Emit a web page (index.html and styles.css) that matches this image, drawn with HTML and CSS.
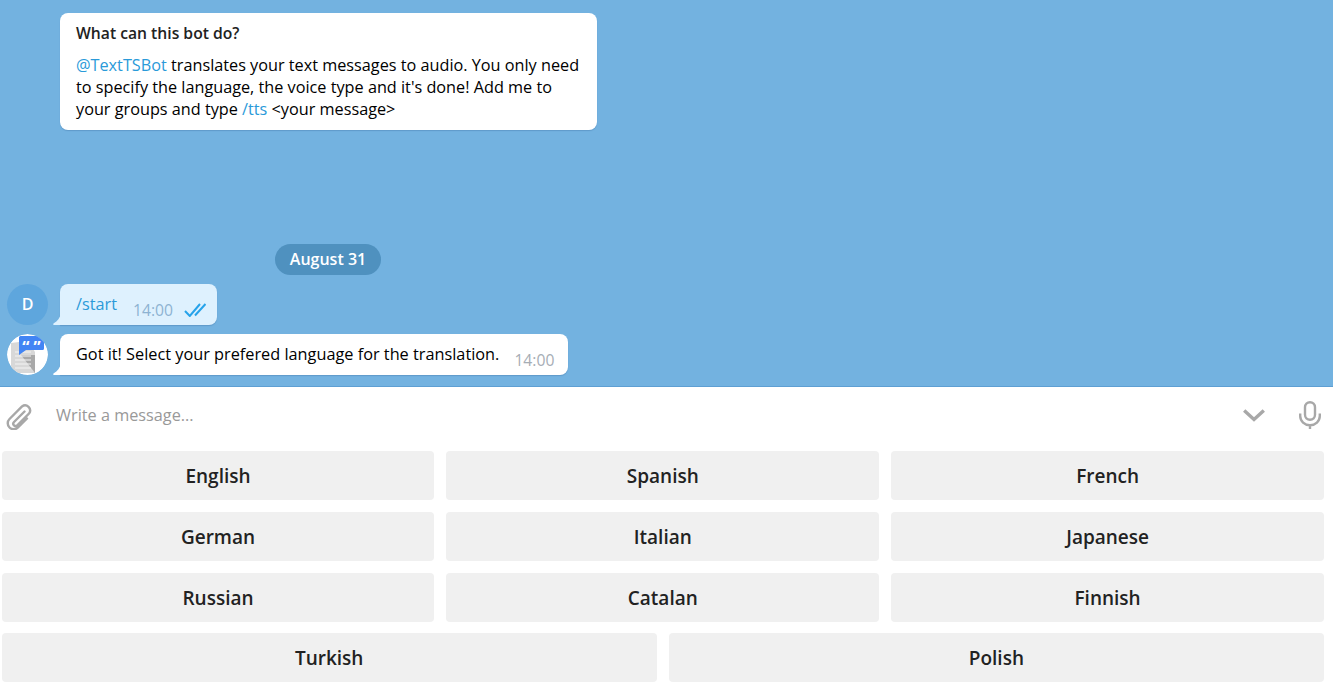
FILE: index.html
```html
<!DOCTYPE html>
<html lang="en">
<head>
<meta charset="utf-8">
<title>TextTSBot</title>
<link rel="stylesheet" href="styles.css">
</head>
<body>
<main class="chat">
  <section class="intro">
    <h2 class="intro-title">What can this bot do?</h2>
    <p class="intro-text"><span class="link">@TextTSBot</span> translates your text messages to audio. You only need to specify the language, the voice type and it's done! Add me to your groups and type <span class="link">/tts</span> &lt;your message&gt;</p>
  </section>
  <div class="date-row"><span class="date">August 31</span></div>
  <div class="msg msg-out">
    <div class="avatar avatar-d">D</div>
    <div class="bubble bubble-out">
      <svg class="tail" viewBox="0 0 8 12"><path class="tail-out" d="M8 0v12H1.500C0 12 -.3 10.900 .8 10.200 4.500 8 7 5 8 0z"/></svg>
      <span class="link">/start</span>
      <span class="time time-out">14:00</span>
      <svg class="ticks" viewBox="0 0 22 14"><path d="M1 8l4.800 5L16 1M11 12.500L21.500 1" fill="none" stroke="#27a3ea" stroke-width="2"/></svg>
    </div>
  </div>
  <div class="msg">
    <div class="avatar avatar-bot">
      <svg viewBox="0 0 41 41">
        <circle cx="20.500" cy="20.500" r="20.500" fill="#fff"/>
        <path d="M4 9l8-1h10l6 10v21H8l-4-2z" fill="#d8d8d8"/>
        <path d="M14 21h14v18z" fill="#a9a9a9"/>
        <path d="M8 18h16M8 22h16M8 26h16M8 30h16M8 34h16" stroke="#f3f3f3" stroke-width="1.200"/>
        <path d="M12 3.500a1.500 1.500 0 0 1 1.500-1.500h22a1.500 1.500 0 0 1 1.500 1.500v11a1.500 1.500 0 0 1-1.500 1.500H19l-7 5z" fill="#4285f4"/>
        <text class="quote" x="24.500" y="18.500">“ ”</text>
      </svg>
    </div>
    <div class="bubble bubble-in">
      <svg class="tail" viewBox="0 0 8 12"><path class="tail-in" d="M8 0v12H1.500C0 12 -.3 10.900 .8 10.200 4.500 8 7 5 8 0z"/></svg>
      <span class="text">Got it! Select your prefered language for the translation.</span>
      <span class="time time-in">14:00</span>
    </div>
  </div>
</main>
<footer class="composer">
  <svg class="icon-clip" viewBox="0 0 26 28"><path d="M18.500 9.500L8 20a2.300 2.300 0 0 0 3.300 3.300L23 11.500a5 5 0 0 0-7-7L3.500 17a6 6 0 0 0 8.500 8.500L21 16.500" fill="none" stroke="#a8a8a8" stroke-width="2.400" stroke-linecap="round"/></svg>
  <span class="placeholder">Write a message...</span>
  <svg class="icon-chevron" viewBox="0 0 22 13"><path d="M1.200 1.500L11 10.500l9.800-9" fill="none" stroke="#a8a8a8" stroke-width="3.400"/></svg>
  <svg class="icon-mic" viewBox="0 0 22 28"><rect x="6" y="1.200" width="10" height="17.600" rx="5" fill="none" stroke="#a8a8a8" stroke-width="2.400"/><path d="M1.200 12.500v2.500a9.800 9.200 0 0 0 19.600 0v-2.500M11 24v4" fill="none" stroke="#a8a8a8" stroke-width="2.400"/></svg>
</footer>
<section class="keyboard">
  <div class="key-row">
    <button class="key">English</button><button class="key">Spanish</button><button class="key">French</button>
  </div>
  <div class="key-row">
    <button class="key">German</button><button class="key">Italian</button><button class="key">Japanese</button>
  </div>
  <div class="key-row">
    <button class="key">Russian</button><button class="key">Catalan</button><button class="key">Finnish</button>
  </div>
  <div class="key-row">
    <button class="key">Turkish</button><button class="key">Polish</button>
  </div>
</section>
</body>
</html>
```
FILE: styles.css
```css
* { box-sizing: border-box; }
html, body { margin: 0; height: 100%; }
body {
  width: 1333px;
  height: 687px;
  overflow: hidden;
  background: #fff;
  font-family: "Open Sans", sans-serif;
  font-size: 16.250px;
  color: #000;
}
.chat {
  height: 387px;
  background: #73b2e0;
  padding: 13px 0 0 7px;
  border-bottom: 1px solid #5e9fd3;
}
.intro {
  width: 537px;
  height: 117px;
  margin-left: 53px;
  padding: 9px 16px;
  background: #fff;
  border-radius: 8px;
  box-shadow: 0 1px 1px rgba(60, 110, 160, .35);
}
.intro-title {
  margin: 0 0 10px;
  font-size: 15.700px;
  line-height: 22px;
  font-weight: 600;
  color: #222;
}
.intro-text {
  margin: 0;
  font-size: 16.240px;
  line-height: 22px;
  color: #000;
}
.link { color: #2a9ad9; }
.text { font-size: 16.300px; }
.date-row {
  width: 642px;
  margin-top: 114px;
  display: flex;
  justify-content: center;
}
.date {
  height: 31px;
  width: 106px;
  border-radius: 16px;
  background: #4f91bf;
  color: #fff;
  font-weight: 600;
  font-size: 16px;
  line-height: 30px;
  text-align: center;
}
.msg {
  display: flex;
  gap: 12px;
  margin-top: 9px;
  height: 41px;
}
.avatar {
  width: 41px;
  height: 41px;
  border-radius: 50%;
  flex: none;
  overflow: hidden;
}
.avatar svg { display: block; width: 41px; height: 41px; }
.avatar-d {
  background: #5ea6dd;
  color: #fff;
  font-weight: 600;
  font-size: 16px;
  line-height: 41px;
  text-align: center;
}
.quote {
  font-family: "Open Sans", sans-serif;
  font-size: 16px;
  font-weight: 700;
  fill: #fff;
  text-anchor: middle;
}
.bubble {
  position: relative;
  display: flex;
  height: 41px;
  padding: 9px 14px 0 16px;
  background: #fff;
  border-radius: 8px 8px 8px 0;
  line-height: 22px;
  box-shadow: 0 1px 1px rgba(60, 110, 160, .35);
}
.bubble-in { width: 508px; padding-right: 0; }
.bubble-out { background: #def1fe; padding-right: 11px; }
.tail {
  position: absolute;
  left: -7px;
  bottom: 0;
  width: 8px;
  height: 12px;
}
.tail-out { fill: #def1fe; }
.tail-in { fill: #fff; }
.time {
  margin: 6px 0 0 16px;
  color: #a6adb5;
  font-size: 15.700px;
  line-height: 22px;
}
.time-in { margin-left: 15px; }
.time-out { color: #8db3d2; margin-left: 16px; }
.ticks {
  width: 22px;
  height: 14px;
  margin: 10px 0 0 11px;
}
.composer {
  display: flex;
  align-items: center;
  height: 57px;
  padding: 0 12px 0 6px;
}
.icon-clip { width: 26px; height: 28px; flex: none; }
.placeholder {
  margin-left: 24px;
  margin-top: -2px;
  flex: 1;
  color: #999;
}
.icon-chevron { width: 22px; height: 13px; margin-right: 34px; }
.icon-mic { width: 22px; height: 28px; margin-top: -2px; }
.keyboard {
  display: flex;
  flex-direction: column;
  gap: 11.700px;
  margin-top: 7.200px;
  padding: 0 9px 0 1.600px;
}
.key-row {
  display: flex;
  gap: 12px;
  height: 49px;
}
.key {
  flex: 1 1 0;
  padding: 1px 0 0;
  border: 0;
  border-radius: 4px;
  background: #f0f0f0;
  color: #222;
  font-family: "Open Sans", sans-serif;
  font-size: 19px;
  font-weight: 600;
}
```
